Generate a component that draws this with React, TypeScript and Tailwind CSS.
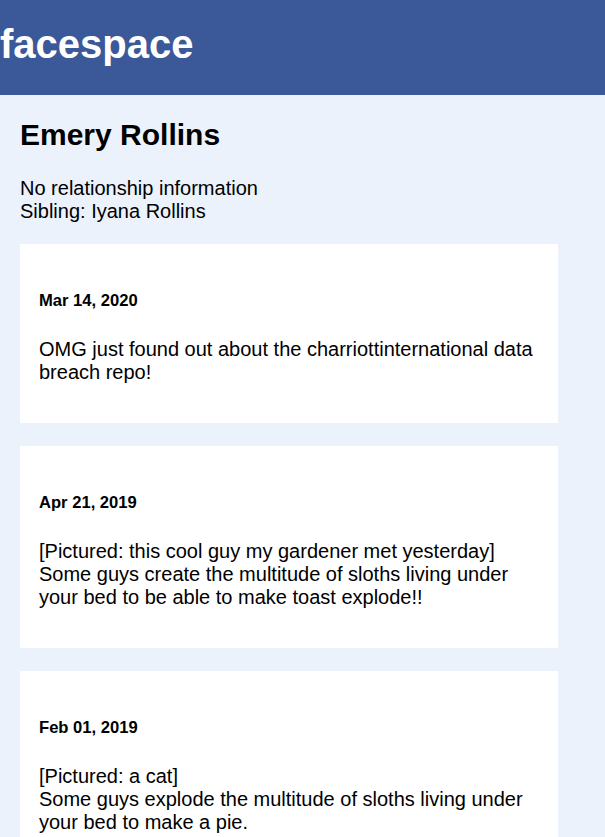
import React from "react";

const posts = [
  {
    date: "Mar 14, 2020",
    lines: ["OMG just found out about the charriottinternational data breach repo!"],
  },
  {
    date: "Apr 21, 2019",
    lines: [
      "[Pictured: this cool guy my gardener met yesterday]",
      "Some guys create the multitude of sloths living under your bed to be able to make toast explode!!",
    ],
  },
  {
    date: "Feb 01, 2019",
    lines: [
      "[Pictured: a cat]",
      "Some guys explode the multitude of sloths living under your bed to make a pie.",
    ],
  },
];

export default function App() {
  return (
    <div
      className="min-h-screen bg-[#ebf2fc] text-black"
      style={{ fontFamily: '"Liberation Sans", Arial, sans-serif' }}
    >
      <header className="h-[95px] bg-[#3b5998] pt-[21px]">
        <h1 className="text-[40px] font-bold leading-[46px] text-white">facespace</h1>
      </header>
      <main className="px-[20px] pt-[23px]">
        <h2 className="text-[30px] font-bold leading-[34.5px]">Emery Rollins</h2>
        <div className="mt-[24px] text-[20px] leading-[23px]">
          <div>No relationship information</div>
          <div>Sibling: Iyana Rollins</div>
        </div>
        <div className="mt-[21px] flex flex-col gap-[23px]">
          {posts.map((p) => (
            <div key={p.date} className="w-[538px] bg-white px-[19px] pb-[39px] pt-[20px]">
              <h5 className="mt-[27px] text-[16.6px] font-bold leading-[19px]">{p.date}</h5>
              <div className="mt-[28px] text-[20px] leading-[23px]">
                {p.lines.map((l, i) => (
                  <div key={i}>{l}</div>
                ))}
              </div>
            </div>
          ))}
        </div>
      </main>
    </div>
  );
}
